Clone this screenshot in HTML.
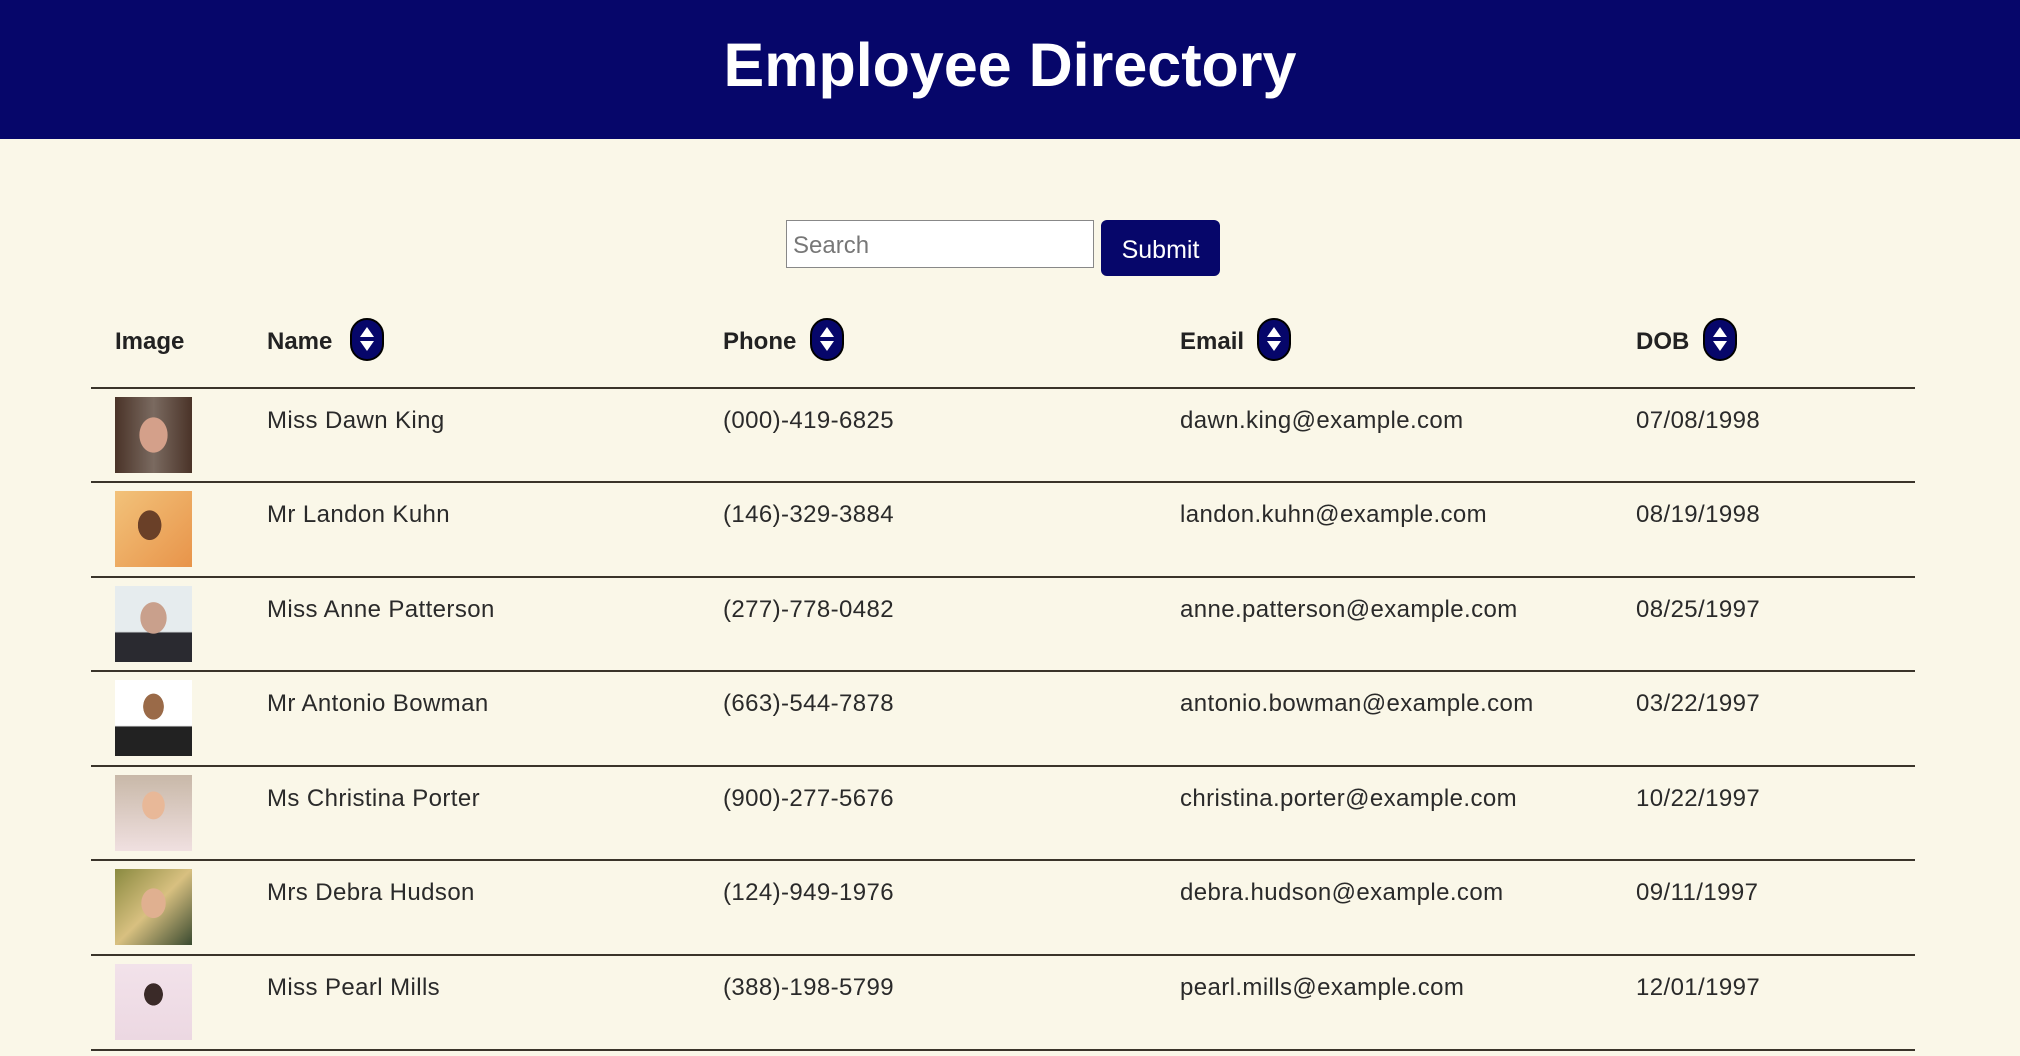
<!DOCTYPE html>
<html><head><meta charset="utf-8"><style>
*{margin:0;padding:0;box-sizing:border-box}
body{width:2020px;height:1056px;overflow:hidden;background:#faf7e8;font-family:"Liberation Sans",sans-serif;color:#222;position:relative}
.hdr{position:absolute;left:0;top:0;width:2020px;height:139px;background:#06066a;color:#fff;text-align:center;font-size:61px;font-weight:bold;line-height:130px;letter-spacing:0px}
.search{position:absolute;left:786px;top:220px;width:308px;height:48px;border:1px solid #888;background:#fff;font-size:24px;color:#777;padding:11px 6px}
.btn{position:absolute;left:1101px;top:220px;width:119px;height:56px;background:#06066a;color:#fff;border-radius:6px;font-size:25px;text-align:center;line-height:60px}
.th{position:absolute;top:328px;font-size:24px;font-weight:bold;color:#222}
.sort{position:absolute;top:318px;width:34px;height:43px;background:#06066a;border:2px solid #000;border-radius:17px}
.sort:before{content:"";position:absolute;left:8px;top:7px;border-left:7px solid transparent;border-right:7px solid transparent;border-bottom:10px solid #fff}
.sort:after{content:"";position:absolute;left:8px;top:21px;border-left:7px solid transparent;border-right:7px solid transparent;border-top:10px solid #fff}
.line{position:absolute;left:91px;width:1824px;height:2px;background:#3a342a}
.cell{position:absolute;font-size:24px;color:#2a2a2a;white-space:nowrap;letter-spacing:0.4px}
.img{position:absolute;left:115px;width:77px;height:76px}
</style></head><body>
<div class="hdr">Employee Directory</div>
<div class="search">Search</div>
<div class="btn">Submit</div>
<div class="th" style="left:115px">Image</div>
<div class="th" style="left:267px">Name</div><div class="sort" style="left:350px"></div>
<div class="th" style="left:723px">Phone</div><div class="sort" style="left:810px"></div>
<div class="th" style="left:1180px">Email</div><div class="sort" style="left:1257px"></div>
<div class="th" style="left:1636px">DOB</div><div class="sort" style="left:1703px"></div>

<div class="line" style="top:387px"></div>
<div class="img" style="top:397px;background:radial-gradient(ellipse 30% 38% at 50% 50%,#d4a08a 60%,transparent 62%),linear-gradient(90deg,#4a3328,#7a6a60 50%,#4a3328)"></div>
<div class="cell" style="left:267px;top:407px">Miss Dawn King</div><div class="cell" style="left:723px;top:407px">(000)-419-6825</div><div class="cell" style="left:1180px;top:407px">dawn.king@example.com</div><div class="cell" style="left:1636px;top:407px">07/08/1998</div>

<div class="line" style="top:481px"></div>
<div class="img" style="top:491px;background:radial-gradient(ellipse 25% 32% at 45% 45%,#6a4028 60%,transparent 62%),linear-gradient(135deg,#f2c27a,#e8944a)"></div>
<div class="cell" style="left:267px;top:501px">Mr Landon Kuhn</div><div class="cell" style="left:723px;top:501px">(146)-329-3884</div><div class="cell" style="left:1180px;top:501px">landon.kuhn@example.com</div><div class="cell" style="left:1636px;top:501px">08/19/1998</div>

<div class="line" style="top:576px"></div>
<div class="img" style="top:586px;background:radial-gradient(ellipse 28% 34% at 50% 42%,#c9a08c 60%,transparent 62%),linear-gradient(180deg,#e6ecee 60%,#2a2a30 62%)"></div>
<div class="cell" style="left:267px;top:596px">Miss Anne Patterson</div><div class="cell" style="left:723px;top:596px">(277)-778-0482</div><div class="cell" style="left:1180px;top:596px">anne.patterson@example.com</div><div class="cell" style="left:1636px;top:596px">08/25/1997</div>

<div class="line" style="top:670px"></div>
<div class="img" style="top:680px;background:radial-gradient(ellipse 22% 28% at 50% 35%,#9a6a48 60%,transparent 62%),linear-gradient(180deg,#fff 60%,#222 62%)"></div>
<div class="cell" style="left:267px;top:690px">Mr Antonio Bowman</div><div class="cell" style="left:723px;top:690px">(663)-544-7878</div><div class="cell" style="left:1180px;top:690px">antonio.bowman@example.com</div><div class="cell" style="left:1636px;top:690px">03/22/1997</div>

<div class="line" style="top:765px"></div>
<div class="img" style="top:775px;background:radial-gradient(ellipse 24% 30% at 50% 40%,#e8b898 60%,transparent 62%),linear-gradient(180deg,#c8b8a8,#f0e0e0)"></div>
<div class="cell" style="left:267px;top:785px">Ms Christina Porter</div><div class="cell" style="left:723px;top:785px">(900)-277-5676</div><div class="cell" style="left:1180px;top:785px">christina.porter@example.com</div><div class="cell" style="left:1636px;top:785px">10/22/1997</div>

<div class="line" style="top:859px"></div>
<div class="img" style="top:869px;background:radial-gradient(ellipse 26% 32% at 50% 45%,#e0b090 60%,transparent 62%),linear-gradient(135deg,#8a8a40,#d8c080 50%,#3a4a30)"></div>
<div class="cell" style="left:267px;top:879px">Mrs Debra Hudson</div><div class="cell" style="left:723px;top:879px">(124)-949-1976</div><div class="cell" style="left:1180px;top:879px">debra.hudson@example.com</div><div class="cell" style="left:1636px;top:879px">09/11/1997</div>

<div class="line" style="top:954px"></div>
<div class="img" style="top:964px;background:radial-gradient(ellipse 20% 24% at 50% 40%,#3a2a28 60%,transparent 62%),linear-gradient(180deg,#f2e2ea,#ecd8e2)"></div>
<div class="cell" style="left:267px;top:974px">Miss Pearl Mills</div><div class="cell" style="left:723px;top:974px">(388)-198-5799</div><div class="cell" style="left:1180px;top:974px">pearl.mills@example.com</div><div class="cell" style="left:1636px;top:974px">12/01/1997</div>

<div class="line" style="top:1049px"></div>
</body></html>
